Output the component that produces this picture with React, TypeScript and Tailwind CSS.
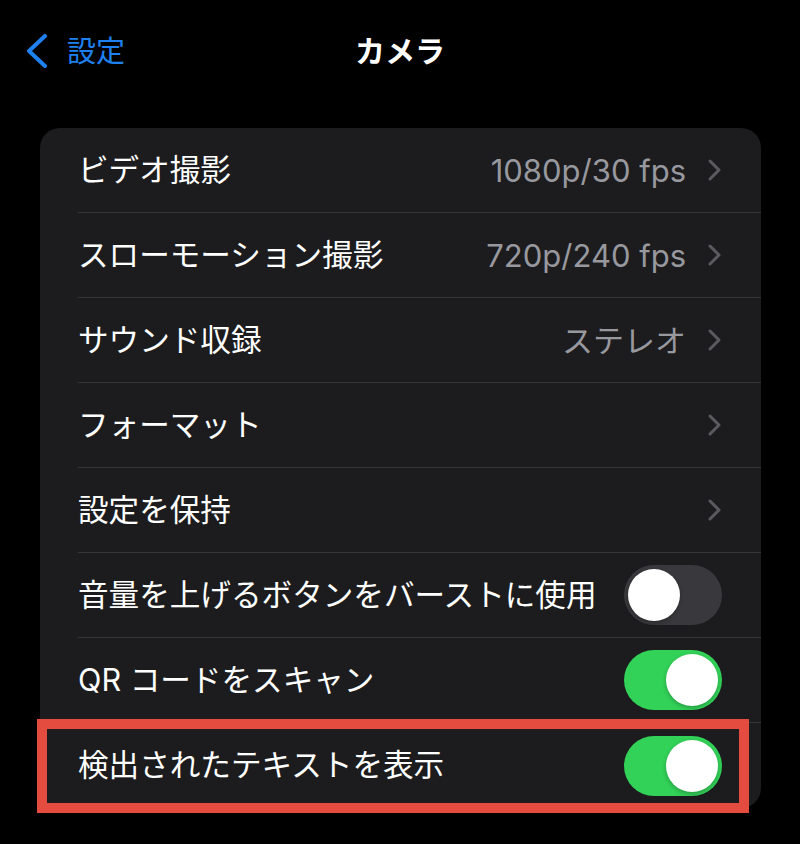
import type { ReactNode } from 'react';

const ChevronRight = () => (
    <svg width="15" height="24" viewBox="0 0 15 24" fill="none" className="shrink-0">
        <path d="M3 3 L12 12 L3 21" stroke="#5b5b5f" strokeWidth="3" strokeLinecap="round" strokeLinejoin="round" />
    </svg>
);

const Toggle = ({ on }: { on: boolean }) => (
    <div
        className={`flex h-[60px] w-[98px] shrink-0 items-center rounded-full p-[4px] ${
            on ? 'justify-end bg-[#32d158]' : 'justify-start bg-[#39393d]'
        }`}
    >
        <div className="h-[52px] w-[52px] rounded-full bg-white shadow-[0_2px_4px_rgba(0,0,0,0.25)]" />
    </div>
);

const Row = ({ label, children, last }: { label: string; children?: ReactNode; last?: boolean }) => (
    <div className={`ml-[38px] flex h-[85px] items-center justify-between pr-[39px] ${last ? '' : 'border-b border-[#353538]'}`}>
        <span className="text-[30.6px] leading-none text-white">{label}</span>
        <div className="flex items-center gap-[21px]">{children}</div>
    </div>
);

const Value = ({ text }: { text: string }) => (
    <span className="text-[31px] leading-none text-[#98989f]">{text}</span>
);

export default function App() {
    return (
        <div className="relative min-h-[844px] w-full bg-black font-['Inter','Noto_Sans_CJK_JP',sans-serif]">
            {/* Nav bar */}
            <div className="grid h-[102px] grid-cols-3 items-center">
                <div className="flex items-center pl-[26px]">
                    <svg width="22" height="34" viewBox="0 0 22 34" fill="none">
                        <path d="M19 2 L3 17 L19 32" stroke="#1f80f0" strokeWidth="4" strokeLinecap="round" strokeLinejoin="round" />
                    </svg>
                    <span className="ml-[19px] text-[29px] leading-none text-[#1f80f0]">設定</span>
                </div>
                <div className="text-center text-[30px] font-semibold leading-none text-white">カメラ</div>
                <div />
            </div>

            {/* Settings group */}
            <div className="ml-[40px] mt-[26px] w-[721px] overflow-hidden rounded-[20px] bg-[#1c1c1e]">
                <Row label="ビデオ撮影">
                    <Value text="1080p/30 fps" />
                    <ChevronRight />
                </Row>
                <Row label="スローモーション撮影">
                    <Value text="720p/240 fps" />
                    <ChevronRight />
                </Row>
                <Row label="サウンド収録">
                    <Value text="ステレオ" />
                    <ChevronRight />
                </Row>
                <Row label="フォーマット">
                    <ChevronRight />
                </Row>
                <Row label="設定を保持">
                    <ChevronRight />
                </Row>
                <Row label="音量を上げるボタンをバーストに使用">
                    <Toggle on={false} />
                </Row>
                <Row label="QR コードをスキャン">
                    <Toggle on />
                </Row>
                <Row label="検出されたテキストを表示" last>
                    <Toggle on />
                </Row>
            </div>

            {/* Highlight annotation */}
            <div className="pointer-events-none absolute left-[37px] top-[719px] h-[94px] w-[712px] border-[10px] border-[#e34c3f]" />
        </div>
    );
}
